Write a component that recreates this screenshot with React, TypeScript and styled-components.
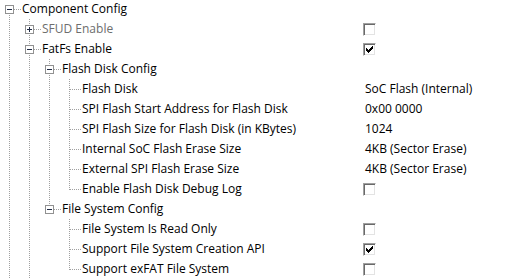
import * as React from "react"
import styled, { createGlobalStyle } from "styled-components"

const GlobalStyle = createGlobalStyle`
  html, body {
    margin: 0;
    padding: 0;
    background: #fff;
  }
  body {
    font-family: "Open Sans", "Noto Sans", sans-serif;
    font-size: 12px;
    color: #000;
    overflow: hidden;
  }
`

const ORIGIN = 9
const INDENT = 20

// lines: one char per level, f = full, t = top half, b = bottom half, n = none
type Item = {
  label: string
  level: number
  lines: string
  expander?: "open" | "closed"
  disabled?: boolean
  value?: string
  check?: boolean
}

const items: Item[] = [
  { label: "Component Config", level: 0, lines: "b", expander: "open" },
  { label: "SFUD Enable", level: 1, lines: "ff", expander: "closed", disabled: true, check: false },
  { label: "FatFs Enable", level: 1, lines: "ff", expander: "open", check: true },
  { label: "Flash Disk Config", level: 2, lines: "fff", expander: "open" },
  { label: "Flash Disk", level: 3, lines: "ffff", value: "SoC Flash (Internal)" },
  { label: "SPI Flash Start Address for Flash Disk", level: 3, lines: "ffff", value: "0x00 0000" },
  { label: "SPI Flash Size for Flash Disk (in KBytes)", level: 3, lines: "ffff", value: "1024" },
  { label: "Internal SoC Flash Erase Size", level: 3, lines: "ffff", value: "4KB (Sector Erase)" },
  { label: "External SPI Flash Erase Size", level: 3, lines: "ffff", value: "4KB (Sector Erase)" },
  { label: "Enable Flash Disk Debug Log", level: 3, lines: "ffft", check: false },
  { label: "File System Config", level: 2, lines: "fft", expander: "open" },
  { label: "File System Is Read Only", level: 3, lines: "ffnf", check: false },
  { label: "Support File System Creation API", level: 3, lines: "ffnf", check: true },
  { label: "Support exFAT File System", level: 3, lines: "ffnt", check: false },
]

const Tree = styled.div`
  display: flex;
  flex-direction: column;
  margin-top: -1px;
`

const Row = styled.div`
  display: flex;
  align-items: center;
  height: 20px;
`

const NameCell = styled.div`
  flex: none;
  width: 363px;
  height: 100%;
  display: flex;
  align-items: center;
  overflow: hidden;
`

const GuideSvg = styled.svg`
  flex: none;
  display: block;
`

const Label = styled.span<{ $disabled?: boolean }>`
  color: ${(p) => (p.$disabled ? "#6d6d6d" : "#000")};
  line-height: 20px;
  white-space: nowrap;
`

const ValueCell = styled.div`
  flex: 1;
  height: 100%;
  display: flex;
  align-items: center;
`

const ValueText = styled.span`
  padding-left: 2px;
  line-height: 20px;
  white-space: nowrap;
`

const CheckBox = styled.span`
  box-sizing: border-box;
  width: 13px;
  height: 13px;
  display: flex;
  align-items: center;
  justify-content: center;
  background: #fff;
  border-top: 1px solid #a0a0a0;
  border-left: 1px solid #a0a0a0;
  border-bottom: 1px solid #fff;
  border-right: 1px solid #fff;
  box-shadow: inset 1px 1px 0 #696969, inset -1px -1px 0 #e3e3e3, 0 0 0 0 transparent;
`

const CheckMark = () => (
  <svg width="7" height="7" viewBox="0 0 7 7" shapeRendering="crispEdges">
    <g fill="#000">
      <rect x="6" y="0" width="1" height="1" />
      <rect x="5" y="1" width="2" height="1" />
      <rect x="0" y="2" width="1" height="1" />
      <rect x="4" y="2" width="3" height="1" />
      <rect x="0" y="3" width="2" height="1" />
      <rect x="3" y="3" width="3" height="1" />
      <rect x="0" y="4" width="5" height="1" />
      <rect x="1" y="5" width="3" height="1" />
      <rect x="2" y="6" width="1" height="1" />
    </g>
  </svg>
)

const Guides = ({ item }: { item: Item }) => {
  const cx = ORIGIN + INDENT * item.level
  const w = cx + 13
  return (
    <GuideSvg width={w} height={20} shapeRendering="crispEdges">
      <g stroke="#a0a0a0" strokeDasharray="1 1">
        {item.lines.split("").map((s, k) => {
          if (s === "n") return null
          const x = ORIGIN + INDENT * k + 0.5
          const y1 = s === "b" ? 10 : 0
          const y2 = s === "t" ? 11 : 20
          return <line key={k} x1={x} x2={x} y1={y1} y2={y2} />
        })}
        <line x1={cx + 1} x2={w - 1} y1={10.5} y2={10.5} />
      </g>
      {item.expander && (
        <g>
          <rect x={cx - 3.5} y={6.5} width={8} height={8} fill="#fff" stroke="#919191" />
          <line x1={cx - 2} x2={cx + 3} y1={10.5} y2={10.5} stroke="#1f2a44" />
          {item.expander === "closed" && (
            <line x1={cx + 0.5} x2={cx + 0.5} y1={8} y2={13} stroke="#1f2a44" />
          )}
        </g>
      )}
    </GuideSvg>
  )
}

const App = () => (
  <>
    <GlobalStyle />
    <Tree>
      {items.map((item) => (
        <Row key={item.label}>
          <NameCell>
            <Guides item={item} />
            <Label $disabled={item.disabled}>{item.label}</Label>
          </NameCell>
          <ValueCell>
            {item.value && <ValueText>{item.value}</ValueText>}
            {item.check !== undefined && <CheckBox>{item.check && <CheckMark />}</CheckBox>}
          </ValueCell>
        </Row>
      ))}
    </Tree>
  </>
)

export default App
